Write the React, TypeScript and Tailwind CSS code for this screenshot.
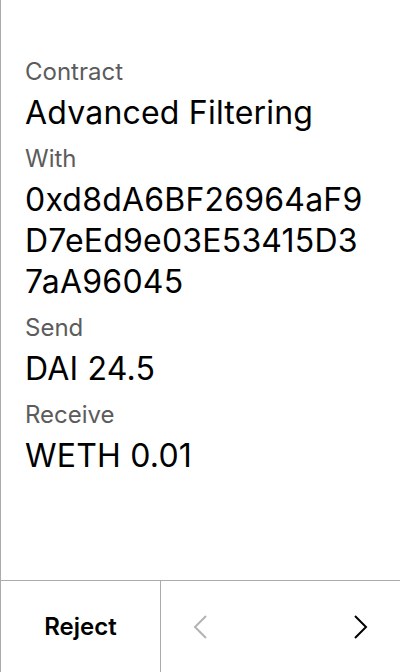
import React from "react";

function Field({ label, value, mono }: { label: string; value: string; mono?: boolean }) {
  return (
    <div className="flex flex-col">
      <div className="text-[24px] leading-[32px] text-[#5c5c5c]">{label}</div>
      <div className={"mt-1 text-[32px] leading-[41px] tracking-[0.2px] text-black " + (mono ? "break-all" : "")}>{value}</div>
    </div>
  );
}

export default function App() {
  return (
    <div
      className="w-[400px] h-[672px] bg-white border-l border-[#ababab] flex flex-col"
      style={{ fontFamily: "Inter, 'Noto Sans', sans-serif" }}
    >
      <div className="flex-1 pl-6 pr-8 pt-[56px] flex flex-col gap-2.5">
        <Field label="Contract" value="Advanced Filtering" />
        <Field label="With" value="0xd8dA6BF26964aF9D7eEd9e03E53415D37aA96045" mono />
        <Field label="Send" value="DAI 24.5" />
        <Field label="Receive" value="WETH 0.01" />
      </div>
      <div className="h-[92px] border-t border-[#ababab] flex">
        <button className="w-[160px] border-r border-[#ababab] flex items-center justify-center text-[24px] font-semibold text-black">
          Reject
        </button>
        <div className="flex-1 flex items-center justify-between px-8">
          <svg width="14" height="24" viewBox="0 0 14 24" fill="none">
            <path d="M13 1 L2 12 L13 23" stroke="#b3b3b3" strokeWidth="2" />
          </svg>
          <svg width="14" height="24" viewBox="0 0 14 24" fill="none">
            <path d="M1 1 L12 12 L1 23" stroke="#000" strokeWidth="2" />
          </svg>
        </div>
      </div>
    </div>
  );
}
